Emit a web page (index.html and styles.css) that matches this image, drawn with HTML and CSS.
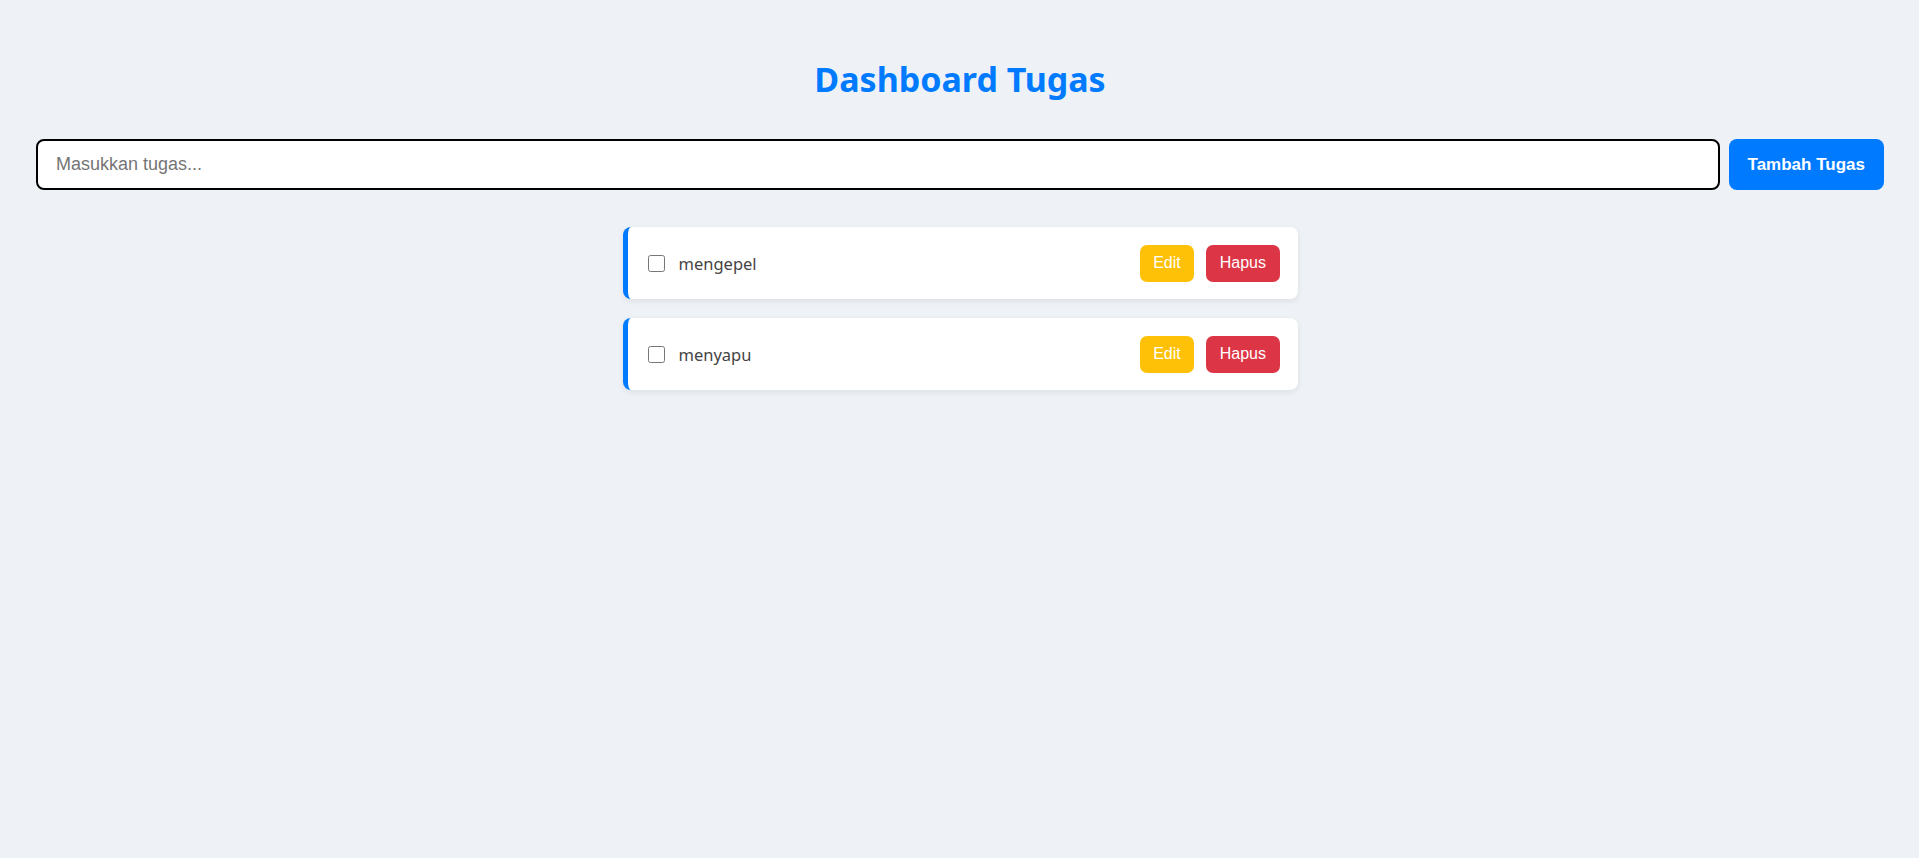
FILE: index.html
```html
<!DOCTYPE html>
<html lang="id">
<head>
<meta charset="utf-8">
<title>Dashboard Tugas</title>
<link rel="stylesheet" href="styles.css">
</head>
<body>
<div class="app">
  <h1 class="title">Dashboard Tugas</h1>
  <div class="input-row">
    <input class="task-input" type="text" placeholder="Masukkan tugas...">
    <button class="add-btn">Tambah Tugas</button>
  </div>
  <ul class="task-list">
    <li class="task">
      <input class="task-check" type="checkbox">
      <span class="task-text">mengepel</span>
      <div class="task-actions">
        <button class="btn btn-edit">Edit</button>
        <button class="btn btn-delete">Hapus</button>
      </div>
    </li>
    <li class="task">
      <input class="task-check" type="checkbox">
      <span class="task-text">menyapu</span>
      <div class="task-actions">
        <button class="btn btn-edit">Edit</button>
        <button class="btn btn-delete">Hapus</button>
      </div>
    </li>
  </ul>
</div>
</body>
</html>
```
FILE: styles.css
```css
* { box-sizing: border-box; }
html, body { margin: 0; height: 100%; }
body {
  background: #eef2f7;
  font-family: "Noto Sans", "Open Sans", sans-serif;
  color: #333;
}
.app {
  padding: 55px 35px 0 36px;
}
.title {
  margin: 0 0 35px;
  text-align: center;
  color: #007bff;
  font-size: 34px;
  line-height: 49px;
  font-weight: 700;
}
.input-row {
  display: flex;
  gap: 9px;
  height: 51px;
}
.task-input {
  flex: 1;
  border: 2px solid #000;
  border-radius: 8px;
  padding: 0 18px;
  font-family: "Liberation Sans", Arial, sans-serif;
  font-size: 18px;
  color: #333;
  background: #fff;
  outline: none;
}
.task-input::placeholder { color: #757575; }
.add-btn {
  background: #007bff;
  color: #fff;
  border: none;
  border-radius: 8px;
  padding: 0 19px;
  font-family: "Liberation Sans", Arial, sans-serif;
  font-size: 17px;
  font-weight: 700;
}
.task-list {
  list-style: none;
  margin: 37px 0 0;
  padding: 0;
}
.task {
  width: 675px;
  height: 72px;
  margin: 0 auto 19px;
  background: #fff;
  border-left: 5px solid #007bff;
  border-radius: 8px;
  box-shadow: 0 2px 6px rgba(0, 0, 0, 0.08);
  display: flex;
  align-items: center;
  padding: 0 18px 0 20px;
}
.task-check {
  width: 17px;
  height: 17px;
  margin: 0 14px 0 0;
}
.task-text {
  flex: 1;
  font-size: 16.5px;
  color: #444;
}
.task-actions {
  display: flex;
  gap: 12px;
}
.btn {
  border: none;
  border-radius: 7px;
  height: 37px;
  padding: 0 13.5px;
  color: #fff;
  font-family: "Liberation Sans", Arial, sans-serif;
  font-size: 16px;
}
.btn-edit { background: #ffc107; }
.btn-delete { background: #dc3545; }
```
